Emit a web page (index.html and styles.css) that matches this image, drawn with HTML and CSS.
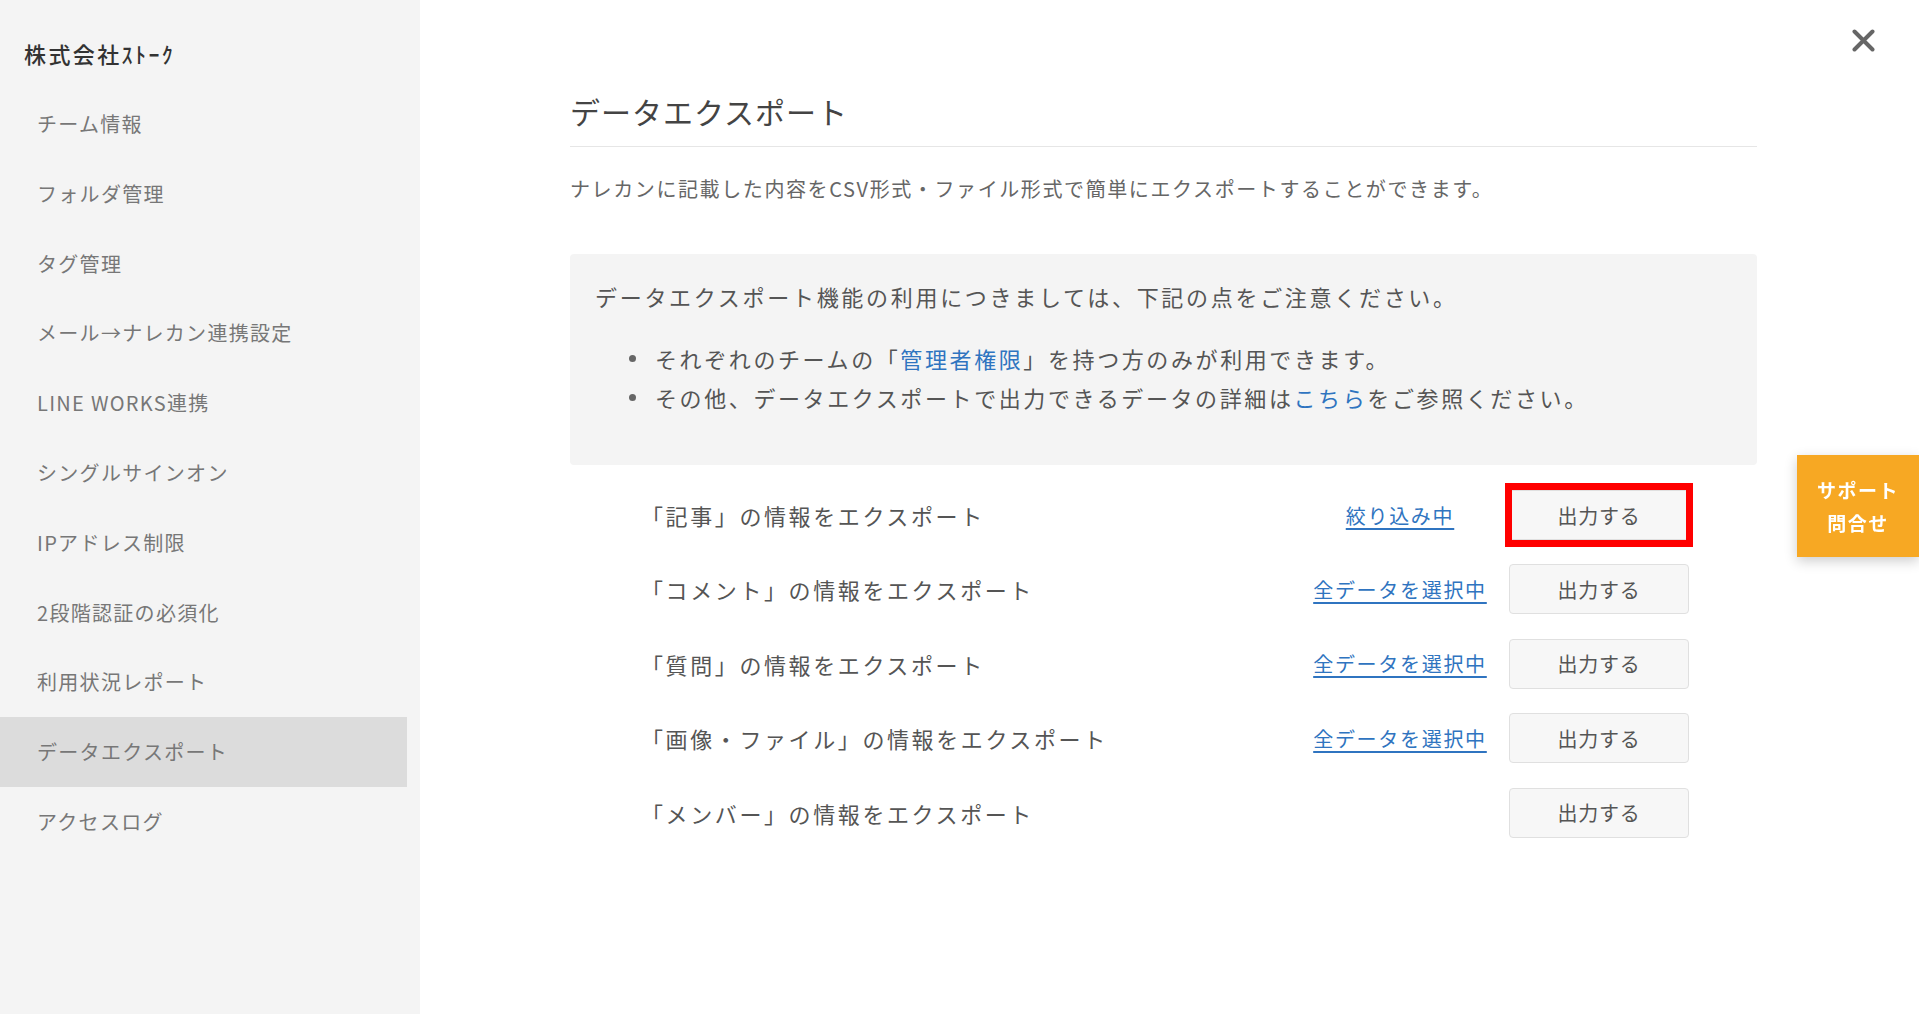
FILE: index.html
```html
<!DOCTYPE html>
<html lang="ja">
  <head>
    <meta charset="utf-8">
    <title>データエクスポート</title>
    <link rel="stylesheet" href="styles.css">
  </head>
  <body>
    <div class="layout">
      <aside class="sidebar">
        <div class="team-name">株式会社ｽﾄｰｸ</div>
        <ul class="menu">
          <li>チーム情報</li>
          <li>フォルダ管理</li>
          <li>タグ管理</li>
          <li>メール→ナレカン連携設定</li>
          <li>LINE WORKS連携</li>
          <li>シングルサインオン</li>
          <li>IPアドレス制限</li>
          <li>2段階認証の必須化</li>
          <li>利用状況レポート</li>
          <li class="active">データエクスポート</li>
          <li>アクセスログ</li>
        </ul>
      </aside>

      <main class="main">
        <div class="content">
          <h1 class="title">データエクスポート</h1>
          <p class="lead">ナレカンに記載した内容をCSV形式・ファイル形式で簡単にエクスポートすることができます。</p>

          <div class="notice">
            <p class="notice-head">データエクスポート機能の利用につきましては、下記の点をご注意ください。</p>
            <ul class="notice-list">
              <li>それぞれのチームの「<a href="#">管理者権限</a>」を持つ方のみが利用できます。</li>
              <li>その他、データエクスポートで出力できるデータの詳細は<a href="#">こちら</a>をご参照ください。</li>
            </ul>
          </div>

          <div class="exports">
            <div class="export-row">
              <span class="label">「記事」の情報をエクスポート</span>
              <a class="filter" href="#">絞り込み中</a>
              <span class="btn-wrap highlight"><button class="btn">出力する</button></span>
            </div>
            <div class="export-row">
              <span class="label">「コメント」の情報をエクスポート</span>
              <a class="filter" href="#">全データを選択中</a>
              <span class="btn-wrap"><button class="btn">出力する</button></span>
            </div>
            <div class="export-row">
              <span class="label">「質問」の情報をエクスポート</span>
              <a class="filter" href="#">全データを選択中</a>
              <span class="btn-wrap"><button class="btn">出力する</button></span>
            </div>
            <div class="export-row">
              <span class="label">「画像・ファイル」の情報をエクスポート</span>
              <a class="filter" href="#">全データを選択中</a>
              <span class="btn-wrap"><button class="btn">出力する</button></span>
            </div>
            <div class="export-row">
              <span class="label">「メンバー」の情報をエクスポート</span>
              <span class="filter"></span>
              <span class="btn-wrap"><button class="btn">出力する</button></span>
            </div>
          </div>
        </div>

        <button class="close" aria-label="閉じる">
          <svg width="23" height="23" viewBox="0 0 23 23">
            <path d="M2.5 2.5 L20.5 20.5 M20.5 2.5 L2.5 20.5" stroke="#666" stroke-width="4" stroke-linecap="round" fill="none" />
          </svg>
        </button>
      </main>
    </div>

    <div class="support">サポート<br>問合せ</div>
  </body>
</html>
```

FILE: styles.css
```css
body {
  margin: 0;
  font-family: "Noto Sans CJK JP", "Noto Sans", sans-serif;
  color: #555;
  background: #fff;
}

ul {
  list-style: none;
  margin: 0;
  padding: 0;
}

.layout {
  display: flex;
  min-height: 100vh;
}

/* sidebar */
.sidebar {
  width: 420px;
  flex-shrink: 0;
  background: #f4f4f4;
  padding-top: 38px;
}

.team-name {
  padding-left: 24px;
  font-size: 22px;
  line-height: 30px;
  font-weight: 500;
  letter-spacing: 2.4px;
  color: #333;
  margin-bottom: 21px;
}

.menu {
  width: 407px;
}

.menu li {
  height: 69.8px;
  line-height: 69.8px;
  padding-left: 37px;
  font-size: 20px;
  letter-spacing: 1.3px;
  color: #777;
}

.menu li.active {
  background: #dcdcdc;
}

/* main */
.main {
  flex: 1;
  position: relative;
  padding-top: 91px;
}

.content {
  width: 1187px;
  margin-left: 150px;
}

.title {
  margin: 0;
  font-size: 30px;
  line-height: 40px;
  font-weight: 400;
  letter-spacing: 1px;
  color: #444;
  padding-bottom: 15px;
  border-bottom: 1px solid #e6e6e6;
}

.lead {
  margin: 27px 0 0;
  font-size: 20px;
  line-height: 30px;
  letter-spacing: 1.6px;
  color: #666;
}

.notice {
  margin-top: 50px;
  background: #f4f4f4;
  border-radius: 4px;
  padding: 27px 25px 48px;
}

.notice-head {
  margin: 0;
  font-size: 22px;
  line-height: 30px;
  letter-spacing: 2.7px;
  color: #555;
}

.notice-list {
  margin-top: 28px;
}

.notice-list li {
  display: flex;
  align-items: center;
  font-size: 22px;
  line-height: 39px;
  letter-spacing: 2.6px;
  color: #555;
}

.notice-list li::before {
  content: "";
  width: 7px;
  height: 7px;
  border-radius: 50%;
  background: #666;
  margin: 0 19px 0 34px;
  flex-shrink: 0;
}

.notice-list a {
  color: #2f74c0;
  text-decoration: none;
}

/* export rows */
.exports {
  margin-top: 25px;
  padding: 0 68px 0 71px;
  display: flex;
  flex-direction: column;
  gap: 24.4px;
}

.export-row {
  display: flex;
  align-items: center;
  height: 50px;
}

.label {
  flex: 1;
  font-size: 22px;
  letter-spacing: 2.6px;
  color: #555;
}

.filter {
  width: 180px;
  margin-right: 19px;
  text-align: center;
  font-size: 20px;
  letter-spacing: 1.7px;
  color: #2f74c0;
  text-decoration: underline;
  text-underline-offset: 4px;
}

.btn-wrap {
  position: relative;
  display: block;
}

.btn {
  display: block;
  width: 180px;
  height: 50px;
  background: #f7f7f7;
  border: 1px solid #e0e0e0;
  border-radius: 4px;
  font-family: inherit;
  font-size: 20px;
  letter-spacing: 0.8px;
  color: #555;
  padding: 0;
}

.highlight::after {
  content: "";
  position: absolute;
  left: -4px;
  right: -4px;
  top: -7px;
  bottom: -7px;
  border: 7px solid #ff0000;
  pointer-events: none;
}

.close {
  position: absolute;
  top: 29px;
  right: 44px;
  width: 23px;
  height: 23px;
  padding: 0;
  border: 0;
  background: none;
}

.close svg {
  display: block;
}

.support {
  position: fixed;
  top: 455px;
  right: 0;
  width: 122px;
  height: 102px;
  box-sizing: border-box;
  padding-top: 18px;
  background: #f7a823;
  color: #fff;
  font-size: 19px;
  font-weight: 700;
  line-height: 33px;
  letter-spacing: 1.5px;
  text-align: center;
  box-shadow: 0 4px 12px rgba(0, 0, 0, 0.2);
}
```
